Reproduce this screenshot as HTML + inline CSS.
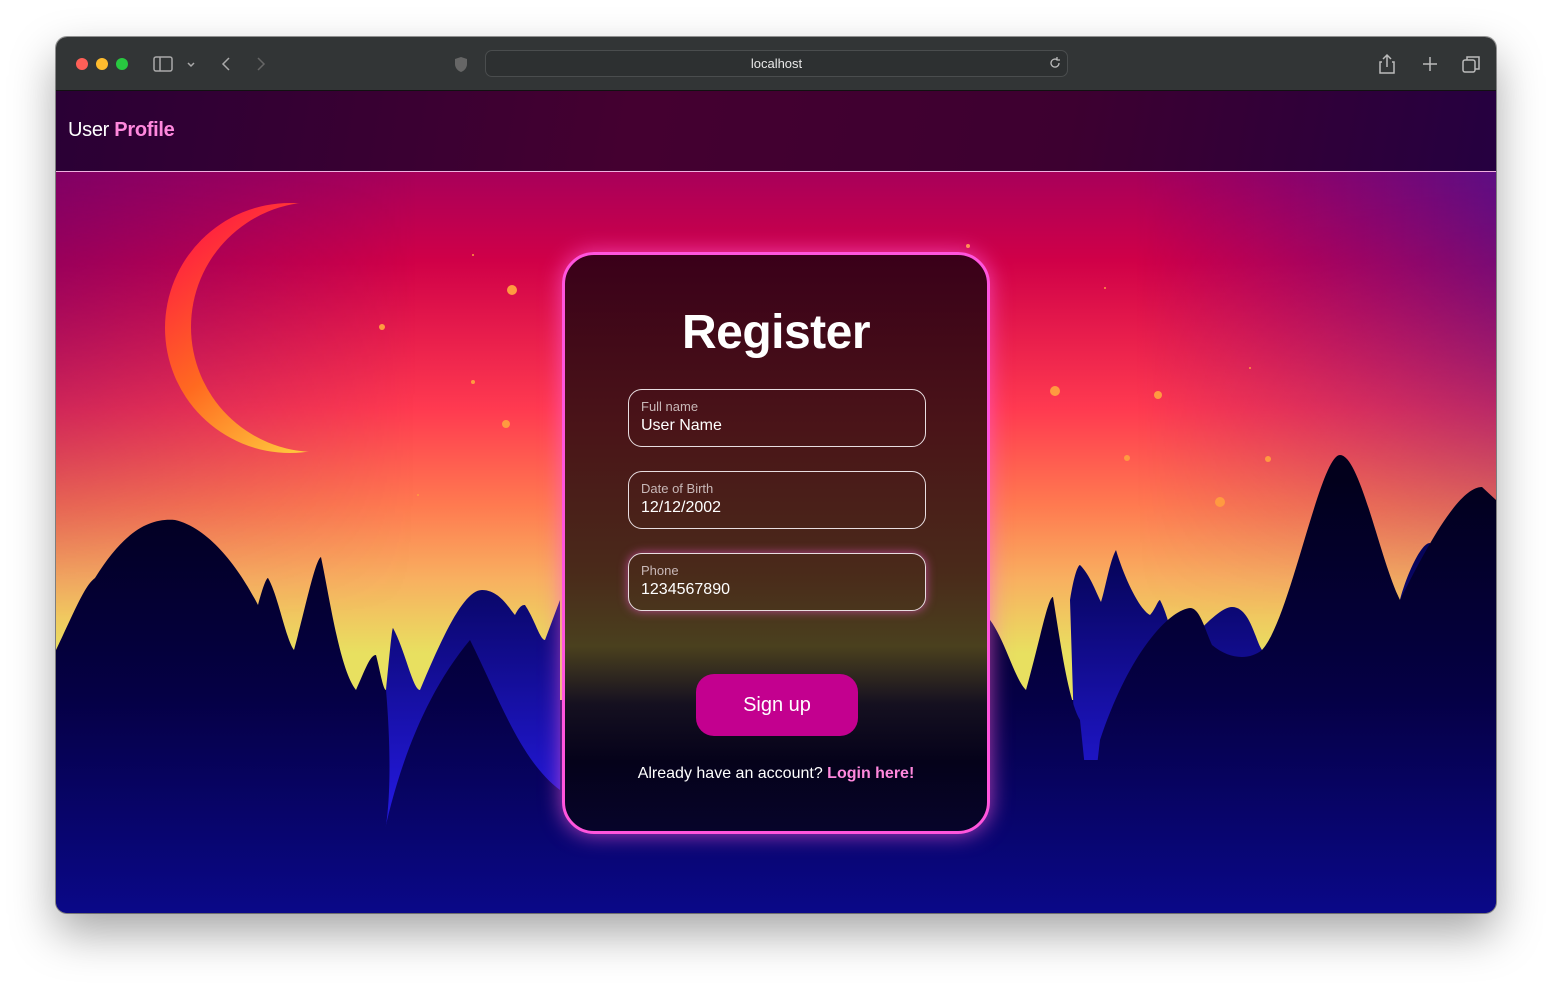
<!DOCTYPE html>
<html><head><meta charset="utf-8"><style>
*{margin:0;padding:0;box-sizing:border-box}
body{width:1552px;height:987px;background:#fff;position:relative;overflow:hidden;font-family:"Liberation Sans",sans-serif}
.win{position:absolute;left:56px;top:37px;width:1440px;height:876px;border-radius:11px;overflow:hidden;box-shadow:0 20px 45px rgba(0,0,0,.35),0 0 0 1px rgba(0,0,0,.4)}
.bar{position:absolute;left:0;top:0;width:1440px;height:54px;background:#323536;border-bottom:1px solid #111}
.dot{position:absolute;top:21px;width:12px;height:12px;border-radius:50%}
.url{position:absolute;left:429px;top:13px;width:583px;height:27px;border:1px solid #4a4d4e;border-radius:7px;background:#2d3031;color:#e8e8e8;font-size:13px;text-align:center;line-height:25px}
.nav{position:absolute;left:0;top:54px;width:1440px;height:81px;background:linear-gradient(100deg,#2a0035 0%,#440030 40%,#3d0030 70%,#250040 100%);border-bottom:1px solid #f0b0e0}
.nav span{position:absolute;left:12px;top:28px;font-size:20px;color:#fff;letter-spacing:-0.3px}
.scene{position:absolute;left:0;top:135px;width:1440px;height:741px}
.card{position:absolute;left:506px;top:80px;width:428px;height:582px;border:3px solid #ff55dd;border-radius:32px;box-shadow:0 0 22px rgba(255,90,220,.7);overflow:hidden;background:linear-gradient(180deg,#3a0019 0%,#4a1418 30%,#4a2a1a 55%,#4a401e 68%,#151020 78%,#05021a 88%,#06042a 100%)}
.card h1{position:absolute;top:50px;width:100%;text-align:center;color:#fff;font-size:48px;font-weight:bold;letter-spacing:-0.5px}
.fld{position:absolute;left:63px;width:298px;height:58px;border:1px solid #e8dde0;border-radius:14px}
.fld .l{position:absolute;left:12px;top:9px;font-size:13px;color:#c8b8b8}
.fld .v{position:absolute;left:12px;top:27px;font-size:16px;color:#fff}
.btn{position:absolute;left:131px;top:419px;width:162px;height:62px;border-radius:18px;background:#c3008f;color:#fff;font-size:20px;text-align:center;line-height:62px}
.acc{position:absolute;top:510px;width:100%;text-align:center;color:#fff;font-size:16px}
.acc b{color:#ff88dd}
</style></head><body>
<div class="win">
 <div class="bar">
  <div class="dot" style="left:20px;background:#fe5f57"></div>
  <div class="dot" style="left:40px;background:#febc2e"></div>
  <div class="dot" style="left:60px;background:#28c840"></div>
  <svg style="position:absolute;left:96px;top:17px" width="120" height="20" viewBox="0 0 120 20" fill="none" stroke="#aaa" stroke-width="1.5"><rect x="2" y="3" width="18" height="14" rx="2"/><line x1="8" y1="3" x2="8" y2="17"/><path d="M36 9l3 3 3-3"/><path d="M77 4l-6 6 6 6"/><path d="M106 4l6 6-6 6" stroke="#666"/></svg>
  <svg style="position:absolute;left:398px;top:19px" width="14" height="17" viewBox="0 0 14 17"><path d="M7 1L1 3v5c0 4 3 7 6 8 3-1 6-4 6-8V3z" fill="#666"/></svg>
  <div class="url">localhost</div>
  <svg style="position:absolute;left:992px;top:19px" width="14" height="14" viewBox="0 0 14 14" fill="none" stroke="#bbb" stroke-width="1.3"><path d="M11 7a4 4 0 1 1-2-3.4M9 1v3h3"/></svg>
  <svg style="position:absolute;left:1320px;top:16px" width="110" height="22" viewBox="0 0 110 22" fill="none" stroke="#bbb" stroke-width="1.5"><path d="M11 2v12M7 6l4-4 4 4M6 9H4v11h14V9h-2"/><path d="M54 4v14M47 11h14"/><rect x="87" y="7" width="12" height="12" rx="2"/><path d="M91 7V4h12v12h-4"/></svg>
 </div>
 <div class="nav"><span>User <b style="color:#ff88dd">Profile</b></span></div>
 <div class="scene">
  <svg width="1440" height="741" viewBox="56 172 1440 741">
   <defs>
    <linearGradient id="sky" x1="0" y1="0" x2="0" y2="1">
     <stop offset="0" stop-color="#a8005a"/><stop offset=".12" stop-color="#d00048"/><stop offset=".32" stop-color="#ff3a50"/><stop offset=".45" stop-color="#ff7a50"/><stop offset=".55" stop-color="#f8b060"/><stop offset=".65" stop-color="#e8e060"/><stop offset="1" stop-color="#e8e060"/>
    </linearGradient>
    <linearGradient id="side" x1="0" y1="0" x2="1" y2="0">
     <stop offset="0" stop-color="#70006a" stop-opacity=".7"/><stop offset=".25" stop-color="#70006a" stop-opacity="0"/><stop offset=".75" stop-color="#60008a" stop-opacity="0"/><stop offset="1" stop-color="#50108a" stop-opacity=".85"/>
    </linearGradient>
    <linearGradient id="topfade" x1="0" y1="0" x2="0" y2="1"><stop offset="0" stop-color="#fff" stop-opacity="1"/><stop offset=".6" stop-color="#fff" stop-opacity="0"/></linearGradient>
    <mask id="tm"><rect x="56" y="172" width="1440" height="741" fill="url(#topfade)"/></mask>
    <linearGradient id="dark" gradientUnits="userSpaceOnUse" x1="0" y1="480" x2="0" y2="913"><stop offset="0" stop-color="#02001c"/><stop offset=".5" stop-color="#050045"/><stop offset="1" stop-color="#0a0888"/></linearGradient>
    <linearGradient id="blue" gradientUnits="userSpaceOnUse" x1="0" y1="560" x2="0" y2="800"><stop offset="0" stop-color="#06045a"/><stop offset="1" stop-color="#2218d8"/></linearGradient>
    <linearGradient id="moon" x1="0" y1="0.2" x2="0.6" y2="1"><stop offset="0" stop-color="#ff2040"/><stop offset=".5" stop-color="#ff6a20"/><stop offset="1" stop-color="#ffd040"/></linearGradient>
    <mask id="cres"><rect x="56" y="172" width="1440" height="741" fill="#fff"/><circle cx="316" cy="327" r="125" fill="#000"/></mask>
   </defs>
   <rect x="56" y="172" width="1440" height="741" fill="url(#sky)"/>
   <rect x="56" y="172" width="1440" height="741" fill="url(#side)" mask="url(#tm)"/>
   <circle cx="290" cy="328" r="125" fill="url(#moon)" mask="url(#cres)"/>
   <g fill="#ff9a40">
    <circle cx="512" cy="290" r="5"/><circle cx="382" cy="327" r="3"/><circle cx="506" cy="424" r="4"/><circle cx="473" cy="382" r="2"/><circle cx="473" cy="255" r="1"/><circle cx="418" cy="495" r="1"/>
    <circle cx="1055" cy="391" r="5"/><circle cx="1158" cy="395" r="4"/><circle cx="1127" cy="458" r="3"/><circle cx="1268" cy="459" r="3"/><circle cx="1220" cy="502" r="5"/><circle cx="1105" cy="288" r="1"/><circle cx="1250" cy="368" r="1"/><circle cx="968" cy="246" r="2"/>
   </g>
   <rect x="56" y="700" width="1440" height="213" fill="url(#dark)"/>
   <path fill="url(#blue)" d="M385,843 L386,690 C390,650 392,628 393,628 C405,650 413,690 420,690 C445,630 465,590 482,590 C500,590 510,610 515,615 C520,605 523,605 525,605 C535,620 540,640 545,640 L560,600 L560,800Z"/>
   <path fill="url(#dark)" d="M56,650 C75,610 85,585 95,578 C125,530 150,518 175,520 C210,528 240,570 258,605 C262,590 266,578 268,578 C278,595 286,640 294,650 C305,610 315,560 321,557 C330,600 340,670 356,690 C365,670 370,655 376,655 C380,670 383,690 386,690 C392,760 390,820 382,843 L382,913 L56,913Z"/>
   <path fill="url(#dark)" d="M380,913 L382,843 C395,780 420,700 470,640 C500,700 520,760 560,790 L560,913Z"/>
   <path fill="url(#blue)" d="M1075,760 L1070,600 C1074,575 1078,565 1080,565 C1090,575 1095,590 1101,602 C1105,590 1110,560 1116,550 C1125,580 1140,610 1150,615 C1155,610 1158,600 1160,600 C1168,615 1172,640 1180,650 C1200,630 1220,607 1232,607 C1250,607 1255,640 1262,650 L1400,600 C1405,580 1420,543 1430,543 L1440,560 L1440,760Z"/>
   <path fill="url(#dark)" d="M990,620 C1005,640 1015,680 1026,690 C1040,640 1048,597 1053,597 C1060,640 1068,700 1080,720 L1100,913 L990,913Z"/>
   <path fill="url(#dark)" d="M1080,913 L1100,740 C1130,650 1170,610 1190,608 C1200,608 1205,630 1212,645 C1230,660 1250,660 1262,650 C1290,620 1320,455 1340,455 C1360,455 1380,560 1400,600 C1430,540 1460,487 1482,487 L1496,500 L1496,913Z"/>
  </svg>
  <div class="card">
   <h1>Register</h1>
   <div class="fld" style="top:134px"><span class="l">Full name</span><span class="v">User Name</span></div>
   <div class="fld" style="top:216px"><span class="l">Date of Birth</span><span class="v">12/12/2002</span></div>
   <div class="fld" style="top:298px;box-shadow:0 0 10px rgba(255,90,220,.6)"><span class="l">Phone</span><span class="v">1234567890</span></div>
   <div class="btn">Sign up</div>
   <div class="acc">Already have an account? <b>Login here!</b></div>
  </div>
 </div>
</div>
</body></html>
